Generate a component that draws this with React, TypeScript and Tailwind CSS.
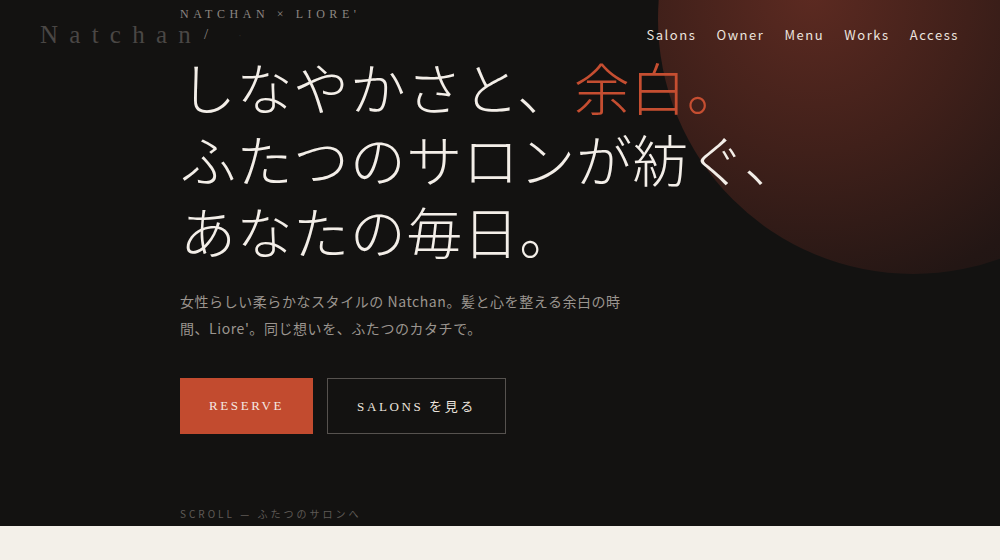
import React from 'react';

const navItems = ['Salons', 'Owner', 'Menu', 'Works', 'Access'];

const serif = "font-['Liberation_Serif','DejaVu_Serif',serif]";
const jp = "font-['Noto_Sans_CJK_JP','Noto_Sans',sans-serif]";

export default function App() {
  return (
    <div className="w-full min-h-[560px] bg-[#f3f0e9]">
      <section className="relative h-[526px] overflow-hidden bg-[#131211]">
        {/* glow circle */}
        <div className="absolute left-[658px] top-[-236px] w-[510px] h-[510px] rounded-full bg-[radial-gradient(circle_at_30%_45%,#5c2a21_0%,#40201a_35%,#231614_68%,#161312_100%)]" />

        {/* header */}
        <header className="absolute inset-x-0 top-0 z-10 flex items-center justify-between pl-[40px] pr-[41px] h-[70px]">
          <div className={`${serif} flex items-center text-[25px] tracking-[0.45em] text-[#4a4745]`}>
            <span>Natchan</span>
            <span className="ml-[2px] text-[15px] tracking-normal text-[#8a8580] mt-[-2px]">/</span>
            <span className="ml-[30px] text-[10px] text-[#2c2a28]">·</span>
          </div>
          <nav className={`${jp} flex items-center gap-[20px] text-[13px] tracking-[0.12em] text-[#ece4df]`}>
            {navItems.map((n) => (
              <span key={n}>{n}</span>
            ))}
          </nav>
        </header>

        {/* hero content */}
        <div className="relative flex flex-col pl-[180px] pt-[6px]">
          <p className={`${serif} text-[12px] leading-[16px] tracking-[0.38em] text-[#8d8782]`}>NATCHAN × LIORE'</p>

          <h1 className={`${jp} mt-[28px] flex flex-col text-[56px] leading-[72px] font-light tracking-[0.01em] text-[#f3eee8]`}>
            <span>
              しなやかさと、<span className="text-[#c54e31]">余白。</span>
            </span>
            <span>ふたつのサロンが紡ぐ、</span>
            <span>あなたの毎日。</span>
          </h1>

          <p className={`${jp} mt-[22px] w-[450px] text-[14px] leading-[27px] tracking-[0.04em] text-[#9b958f]`}>
            女性らしい柔らかなスタイルの Natchan。髪と心を整える余白の時間、Liore'。同じ想いを、ふたつのカタチで。
          </p>

          <div className="mt-[36px] flex gap-[14px]">
            <button className={`${serif} h-[56px] w-[133px] bg-[#c24b2f] text-[13px] tracking-[0.2em] text-[#f5e8e2]`}>
              RESERVE
            </button>
            <button className={`${serif} h-[56px] w-[179px] border border-[#56524f] text-[13px] tracking-[0.2em] text-[#ebe4de]`}>
              SALONS <span className={jp}>を見る</span>
            </button>
          </div>

          <p className={`${jp} mt-[72px] text-[10px] leading-[16px] tracking-[0.3em] text-[#5f5a56]`}>SCROLL — ふたつのサロンへ</p>
        </div>
      </section>
      <div className="h-[34px] bg-[#f3f0e9]" />
    </div>
  );
}
